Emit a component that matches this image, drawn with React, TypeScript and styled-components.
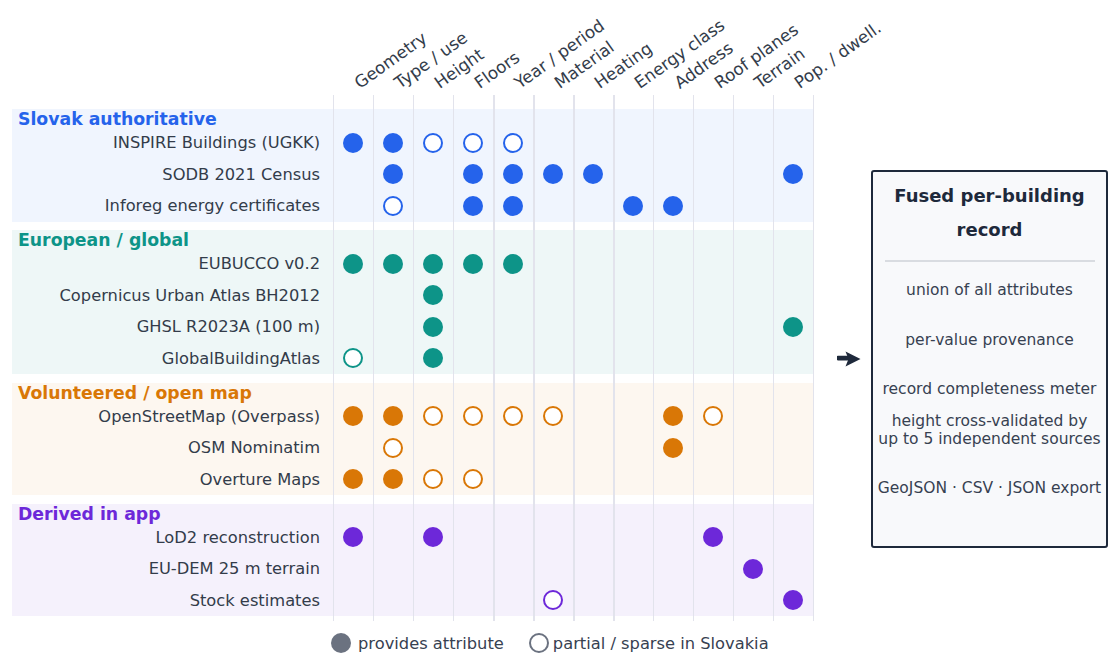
import styled, { createGlobalStyle } from "styled-components";

type Mark = "F" | "O" | ".";

interface Source {
  name: string;
  cells: string;
}

interface Group {
  title: string;
  color: string;
  tint: string;
  sources: Source[];
}

const columns = [
  "Geometry",
  "Type / use",
  "Height",
  "Floors",
  "Year / period",
  "Material",
  "Heating",
  "Energy class",
  "Address",
  "Roof planes",
  "Terrain",
  "Pop. / dwell.",
];

const groups: Group[] = [
  {
    title: "Slovak authoritative",
    color: "#2563eb",
    tint: "rgba(37, 99, 235, 0.065)",
    sources: [
      { name: "INSPIRE Buildings (UGKK)", cells: "FFOOO......." },
      { name: "SODB 2021 Census", cells: ".F.FFFF....F" },
      { name: "Inforeg energy certificates", cells: ".O.FF..FF..." },
    ],
  },
  {
    title: "European / global",
    color: "#0d9488",
    tint: "rgba(13, 148, 136, 0.07)",
    sources: [
      { name: "EUBUCCO v0.2", cells: "FFFFF......." },
      { name: "Copernicus Urban Atlas BH2012", cells: "..F........." },
      { name: "GHSL R2023A (100 m)", cells: "..F........F" },
      { name: "GlobalBuildingAtlas", cells: "O.F........." },
    ],
  },
  {
    title: "Volunteered / open map",
    color: "#d97706",
    tint: "rgba(217, 119, 6, 0.06)",
    sources: [
      { name: "OpenStreetMap (Overpass)", cells: "FFOOOO..FO.." },
      { name: "OSM Nominatim", cells: ".O......F..." },
      { name: "Overture Maps", cells: "FFOO........" },
    ],
  },
  {
    title: "Derived in app",
    color: "#6d28d9",
    tint: "rgba(109, 40, 217, 0.065)",
    sources: [
      { name: "LoD2 reconstruction", cells: "F.F......F.." },
      { name: "EU-DEM 25 m terrain", cells: "..........F." },
      { name: "Stock estimates", cells: ".....O.....F" },
    ],
  },
];

const fusedItems = [
  "union of all attributes",
  "per-value provenance",
  "record completeness meter",
  "height cross-validated by\nup to 5 independent sources",
  "GeoJSON · CSV · JSON export",
];

const GlobalStyle = createGlobalStyle`
  html, body {
    margin: 0;
    padding: 0;
    background: #ffffff;
  }
  body {
    font-family: "DejaVu Sans", "Liberation Sans", sans-serif;
    color: #333c4a;
  }
`;

const Page = styled.div`
  width: 1119px;
  height: 670px;
  display: flex;
  flex-direction: column;
  overflow: hidden;
`;

const Top = styled.div`
  display: flex;
`;

const Chart = styled.div`
  width: 813px;
  display: flex;
  flex-direction: column;
`;

const ColumnHeader = styled.div`
  height: 95px;
  display: grid;
  grid-template-columns: 333px repeat(12, 40px);
`;

const HeaderCell = styled.div`
  display: flex;
  align-items: flex-end;
  padding: 0 0 4px 28px;
  min-width: 0;
`;

const HeaderLabel = styled.span`
  display: block;
  white-space: nowrap;
  font-size: 16.8px;
  line-height: 16px;
  color: #333c4a;
  transform-origin: 0 100%;
  transform: rotate(-35.5deg);
`;

const Body = styled.div`
  position: relative;
  display: flex;
  flex-direction: column;
  gap: 8.5px;
  padding: 14px 0 5px 12px;

  &::after {
    content: "";
    position: absolute;
    top: 0;
    bottom: 0;
    left: 332.5px;
    width: 482px;
    pointer-events: none;
    background: repeating-linear-gradient(
      to right,
      #e2e3ec 0 1.5px,
      transparent 1.5px 40px
    );
  }
`;

const Band = styled.section<{ $tint: string }>`
  background: ${(p) => p.$tint};
`;

const BandTitle = styled.div<{ $color: string }>`
  height: 18px;
  padding-left: 6px;
  font-size: 17.3px;
  font-weight: bold;
  line-height: 20px;
  color: ${(p) => p.$color};
`;

const Row = styled.div`
  height: 31.5px;
  display: grid;
  grid-template-columns: 321px repeat(12, 40px);
  align-items: center;
`;

const RowLabel = styled.div`
  padding-right: 13px;
  text-align: right;
  font-size: 16.3px;
  white-space: nowrap;
  color: #333c4a;
`;

const Cell = styled.div`
  display: flex;
  justify-content: center;
  align-items: center;
`;

const Dot = styled.span<{ $color: string; $open?: boolean }>`
  width: 20px;
  height: 20px;
  box-sizing: border-box;
  border-radius: 50%;
  background: ${(p) => (p.$open ? "#ffffff" : p.$color)};
  border: ${(p) => (p.$open ? `2.5px solid ${p.$color}` : "none")};
`;

const Side = styled.div`
  flex: 1;
  display: flex;
  align-items: flex-start;
  padding: 170px 0 0 24px;
`;

const Link = styled.div`
  display: flex;
  align-items: center;
  gap: 10px;
`;

const Panel = styled.div`
  width: 237px;
  height: 378px;
  box-sizing: border-box;
  border: 2px solid #1e293b;
  border-radius: 3px;
  background: #f8f9fb;
  display: flex;
  flex-direction: column;
  text-align: center;
`;

const PanelTitle = styled.div`
  padding-top: 7px;
  font-size: 18px;
  font-weight: bold;
  line-height: 34px;
  color: #1e293b;
`;

const Rule = styled.div`
  height: 1.5px;
  margin: 13px 11px 4px 12px;
  background: #d9dce1;
`;

const FusedItem = styled.div<{ $lift?: boolean }>`
  height: 49.5px;
  box-sizing: border-box;
  padding-bottom: ${(p) => (p.$lift ? "17px" : "0")};
  display: flex;
  align-items: center;
  justify-content: center;
  font-size: 15.5px;
  line-height: 18px;
  white-space: pre-line;
  color: #374151;
`;

const Legend = styled.div`
  display: flex;
  align-items: center;
  gap: 25px;
  margin-top: 12px;
  padding-left: 331px;
`;

const LegendItem = styled.div<{ $gap: number }>`
  display: flex;
  align-items: center;
  gap: ${(p) => p.$gap}px;
  font-size: 16.3px;
  color: #374151;
`;

const Arrow = () => (
  <svg width="24" height="16" viewBox="0 0 24 16">
    <path d="M1 6.2 H11 V8 H1 Z" fill="#1e293b" stroke="#1e293b" strokeWidth="2.8" strokeLinejoin="round" />
    <path d="M8.5 0.5 L23.5 8 L8.5 15.5 L11.5 8 Z" fill="#1e293b" />
  </svg>
);

const App = () => {
  return (
    <Page>
      <GlobalStyle />
      <Top>
        <Chart>
          <ColumnHeader>
            <div />
            {columns.map((c) => (
              <HeaderCell key={c}>
                <HeaderLabel>{c}</HeaderLabel>
              </HeaderCell>
            ))}
          </ColumnHeader>
          <Body>
            {groups.map((g) => (
              <Band key={g.title} $tint={g.tint}>
                <BandTitle $color={g.color}>{g.title}</BandTitle>
                {g.sources.map((s) => (
                  <Row key={s.name}>
                    <RowLabel>{s.name}</RowLabel>
                    {s.cells.split("").map((m, i) => (
                      <Cell key={i}>
                        {(m as Mark) !== "." && <Dot $color={g.color} $open={m === "O"} />}
                      </Cell>
                    ))}
                  </Row>
                ))}
              </Band>
            ))}
          </Body>
        </Chart>
        <Side>
          <Link>
            <Arrow />
            <Panel>
              <PanelTitle>
                Fused per-building
                <br />
                record
              </PanelTitle>
              <Rule />
              {fusedItems.map((t, i) => (
                <FusedItem key={t} $lift={i === 3}>
                  {t}
                </FusedItem>
              ))}
            </Panel>
          </Link>
        </Side>
      </Top>
      <Legend>
        <LegendItem $gap={7}>
          <Dot $color="#6b7280" />
          provides attribute
        </LegendItem>
        <LegendItem $gap={4}>
          <Dot $color="#6b7280" $open />
          partial / sparse in Slovakia
        </LegendItem>
      </Legend>
    </Page>
  );
};

export default App;
